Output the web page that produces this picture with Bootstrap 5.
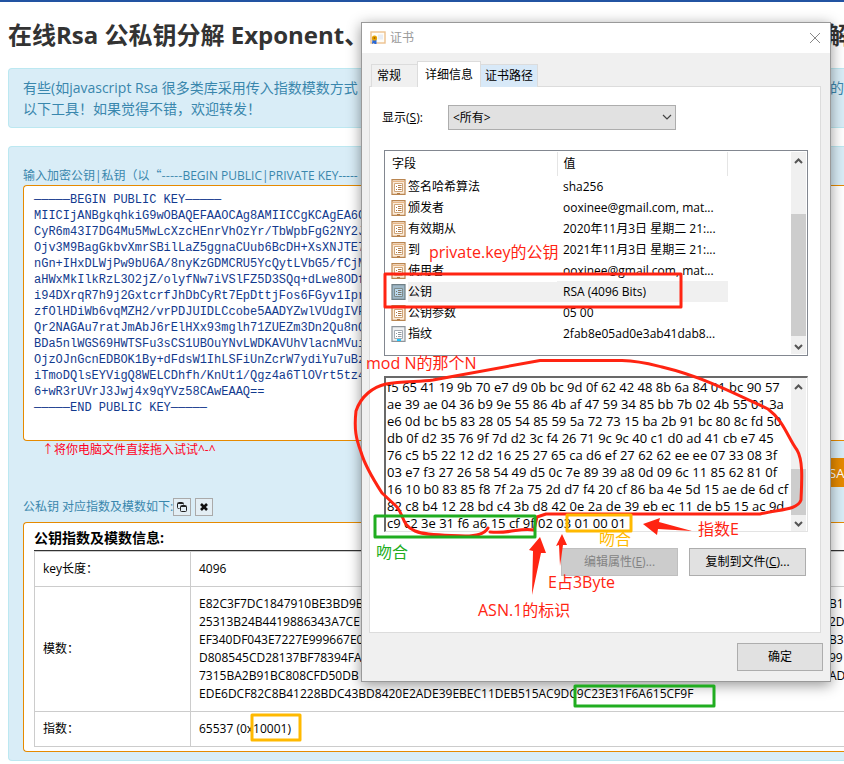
<!DOCTYPE html>
<html lang="zh-CN">
<head>
<meta charset="utf-8">
<meta name="viewport" content="width=device-width, initial-scale=1">
<title>在线Rsa 公私钥分解</title>
<link href="https://cdn.jsdelivr.net/npm/bootstrap@5.3.0/dist/css/bootstrap.min.css" rel="stylesheet">
<style>
body{font-family:"Open Sans","Noto Sans CJK SC",sans-serif;font-size:12px;line-height:18px;color:#000;background:#fff}
.page-shell{min-height:764px}
.top-bar{height:2px;background:#2253a2}
.page-title{font-size:24px;line-height:32px;font-weight:700;color:#333;margin:17px 0 17px 8px}
.tail-title{width:17px}
.tail-info{width:14px}
.tail-hex{width:15px}
.info-box{background:#d9edf7;border:1px solid #bce8f1;color:#3a87ad;margin-left:8px;border-right:0;border-radius:4px 0 0 4px}
.info-intro{font-size:14px;line-height:21px;padding:8px 0 8px 14px;margin-bottom:18px}
.tool-box{padding:17px 0 8px 14px}
.key-label{line-height:21px;height:21px;display:block;white-space:nowrap}
.cjk-face{font-family:"Noto Sans CJK SC",sans-serif}
.key-area{height:256px;border:1px solid #e68a00;border-right:0;border-radius:4px 0 0 4px;background:#fff;color:#123a8e;font-family:"Liberation Mono",monospace;font-size:12px;line-height:16px;padding:6px 0 6px 10px;resize:none;white-space:pre;overflow:hidden;outline:0}
.hint{line-height:17px;height:17px;color:#f02;padding-left:19px}
.btn-orange{width:40px;height:29px;background:#e68a00;color:#fff;border:0;border-radius:0;font-size:13px;padding:0 0 0 17px;text-align:left;white-space:nowrap;overflow:hidden}
.result-head{height:35px;padding-bottom:6px}
.mini-btn{width:18px;height:18px;border:1px solid #aaa;background:#e3eef4;padding:0}
.result-box{background:#fff;border:1px solid #e68a00;border-right:0;border-radius:4px 0 0 4px;color:#000;padding:4px 0 4px 10px}
.result-box h2{font-size:14px;line-height:22px;height:24px;font-weight:700;border-bottom:1px solid #333;margin:0}
.data-table{width:100%;border-collapse:collapse;table-layout:fixed}
.data-table td,.data-table th{border:1px solid #ccc;padding:8px;font-weight:400}
.data-table th{width:156px}
.data-table td{border-right:0;padding-right:0}
.line-row{display:flex;justify-content:space-between;white-space:nowrap;overflow:hidden}
.line-row>span:last-child{overflow:hidden;flex:none}
.cert-window{position:absolute;top:22px;left:361px;width:470px;background:#f0f0f0;border:1px solid #999;box-shadow:0 3px 13px rgba(0,0,0,.42);color:#000}
.cert-title{height:30px;background:#fff;color:#999;padding:0 9px 0 8px}
.cert-title button{border:0;background:none;padding:0;width:12px;height:30px;display:flex;align-items:center}
.cert-body{padding:8px 7px 10px}
.tab-row{padding-left:2px;margin-bottom:-1px;position:relative}
.tab-row button{border:1px solid #dcdcdc;border-bottom:0;background:#f0f0f0;height:23px;padding:0 5px;color:#000;line-height:22px}
.tab-row .tab-first{width:46px;text-align:left;border-right:0}
.tab-row .tab-on{height:26px;width:64px;background:#fff;padding:0 6px;white-space:nowrap}
.tab-row .tab-blue{background:#d8e9f8;border-left:0;width:57px;white-space:nowrap;padding:0 4px}
.tab-panel{background:#fff;border:1px solid #dcdcdc;padding:18px 12px 56px;margin-right:2px}
.show-row label{width:66px}
.show-row select{width:228px;height:25px;appearance:none;border:1px solid #adadad;background:#e1e1e1;border-radius:0;padding:0 4px;font-size:12px;color:#000}
.select-wrap{position:relative}
.select-wrap svg{position:absolute;right:4px;top:9px;pointer-events:none}
.list-frame{border:1px solid #828790;height:206px;padding:1px;margin:20px 0 0 2px}
.field-table{table-layout:fixed;width:342px;border-collapse:collapse}
.field-table th{height:24px;font-weight:400;border-right:1px solid #e5e5e5;padding:0 6px}
.field-table td{height:21px;padding:0 6px;line-height:20px;white-space:nowrap}
.field-table td:first-child{padding-left:5px}
.field-table .c-one{width:171px}
.field-table svg{display:block;margin-right:2px;flex:none}
.picked td:last-child{background:#f0f0f0}
.picked .name-part{background:#f0f0f0;margin-right:-6px;flex:1}
.bar{width:15px;background:#f0f0f0;flex:none}
.bar svg{display:block;flex:none}
.thumb{background:#cdcdcd}
.thumb-list{height:122px;margin-top:44px}
.thumb-hex{height:46px;margin-top:73px}
.hex-frame{border:1px solid #e3e3e3;border-top:2px solid #696969;border-left:2px solid #696969;height:156px;margin:20px 0 0 2px;padding-right:1px}
.hex-frame textarea{flex:1;min-width:0;border:0;resize:none;outline:0;overflow:hidden;white-space:pre;padding:1px 0 0 1px;font-size:13px;line-height:17px;color:#000;background:#fff}
.win-btn{height:28px;border:1px solid #adadad;background:#e1e1e1;color:#000;padding:0;text-align:center}
.win-btn:disabled{background:#ccc;border-color:#bfbfbf;color:#838383}
.w-wide{width:117px}
.w-ok{width:86px}
.pair-row{gap:11px;margin-right:2px}
.ok-row{margin-top:10px}
.notes{position:absolute;left:0;top:0;pointer-events:none}
.notes text{font-size:16px}
</style>
<script src="https://cdn.jsdelivr.net/npm/bootstrap@5.3.0/dist/js/bootstrap.bundle.min.js"></script>
</head>
<body>
<div class="page-shell position-relative overflow-hidden">
<div class="top-bar"></div>
<main>
<h1 class="page-title line-row"><span>在线Rsa 公私钥分解 Exponent、</span><span class="tail-title">解</span></h1>
<section class="info-box info-intro">
<div class="line-row"><span>有些(如javascript Rsa 很多类库采用传入指数模数方式</span><span class="tail-info">的</span></div>
<div>以下工具！如果觉得不错，欢迎转发！</div>
</section>
<section class="info-box tool-box">
<label class="key-label" for="keyArea">输入加密公钥|私钥<span class="cjk-face">（以“-----</span>BEGIN PUBLIC|PRIVATE KEY-----</label>
<textarea id="keyArea" class="key-area d-block w-100" spellcheck="false">—————BEGIN PUBLIC KEY—————
MIICIjANBgkqhkiG9wOBAQEFAAOCAg8AMIICCgKCAgEA6Cw
CyR6m43I7DG4Mu5MwLcXzcHEnrVhOzYr/TbWpbFgG2NY2JY
Ojv3M9BagGkbvXmrSBilLaZ5ggnaCUub6BcDH+XsXNJTE7J
nGn+IHxDLWjPw9bU6A/8nyKzGDMCRU5YcQytLVbG5/fCjMD
aHWxMkIlkRzL3O2jZ/olyfNw7iVSlFZ5D3SQq+dLwe8ODfB
i94DXrqR7h9j2GxtcrfJhDbCyRt7EpDttjFos6FGyv1Ipr5
zfOlHDiWb6vqMZH2/vrPDJUIDLCcobe5AADYZwlVUdgIVFz
Qr2NAGAu7ratJmAbJ6rElHXx93mglh71ZUEZm3Dn2Qu8nQ9
BDa5nlWGS69HWTSFu3sCS1UBOuYNvLWDKAVUhVlacnMVuiu
OjzOJnGcnEDBOK1By+dFdsW1IhLSFiUnZcrW7ydiYu7uBzM
iTmoDQlsEYVigQ8WELCDhfh/KnUt1/Qgz4a6TlOVrt5tz4L
6+wR3rUVrJ3Jwj4x9qYVz58CAwEAAQ==
—————END PUBLIC KEY—————</textarea>
<div class="hint">↑将你电脑文件直接拖入试试^-^</div>
<div class="d-flex justify-content-end"><button class="btn-orange" type="button">RSA私钥</button></div>
<div class="result-head d-flex align-items-end">
<span>公私钥 对应指数及模数如下:</span>
<button class="mini-btn d-flex align-items-center justify-content-center" type="button" aria-label="复制"><svg width="10" height="10" viewBox="0 0 10 10" fill="none" stroke="#222"><path d="M2.5 6.5h-1a1 1 0 0 1-1-1v-4a1 1 0 0 1 1-1h4a1 1 0 0 1 1 1v1"/><rect x="3.5" y="3.5" width="6" height="6" rx="1"/><path d="M1 1.5h5M4 4.5h5"/></svg></button>
<button class="mini-btn d-flex align-items-center justify-content-center ms-1" type="button" aria-label="清除"><svg width="8" height="8" viewBox="0 0 8 8" stroke="#111" stroke-width="2.6"><path d="M1 1l6 6M7 1l-6 6"/></svg></button>
</div>
<div class="result-box">
<h2>公钥指数及模数信息:</h2>
<table class="data-table">
<tr><th scope="row">key长度：</th><td>4096</td></tr>
<tr><th scope="row">模数：</th><td>
<div class="line-row"><span>E82C3F7DC1847910BE3BD9B</span><span class="tail-hex">B1</span></div>
<div class="line-row"><span>25313B24B4419886343A7CE</span><span class="tail-hex">2D</span></div>
<div class="line-row"><span>EF340DF043E7227E999667E0</span><span class="tail-hex">B3</span></div>
<div class="line-row"><span>D808545CD28137BF78394FA</span><span class="tail-hex">99</span></div>
<div class="line-row"><span>7315BA2B91BC808CFD50DB</span><span class="tail-hex">AD</span></div>
<div>EDE6DCF82C8B41228BDC43BD8420E2ADE39EBEC11DEB515AC9DC9C23E31F6A615CF9F</div>
</td></tr>
<tr><th scope="row">指数：</th><td>65537 (0x10001)</td></tr>
</table>
</div>
</section>
</main>

<section class="cert-window" role="dialog" aria-label="证书">
<header class="cert-title d-flex align-items-center justify-content-between">
<span class="d-flex align-items-center gap-1"><svg width="16" height="14" viewBox="0 0 16 14"><rect x="1" y="1" width="14" height="11" fill="#fffdf8" stroke="#edc18d" stroke-width="1.4"/><path d="M8 3.5h5v5H8z" fill="#e9edf4"/><path d="M2.500 8l-.5 5 2-1 .5 1 1 0 1 0 0-5z" fill="#2868d8"/><circle cx="4.5" cy="7" r="2.6" fill="#e8a400"/><circle cx="4.5" cy="7" r="1" fill="#a86400"/></svg><span>证书</span></span>
<button type="button" aria-label="关闭"><svg width="12" height="12" viewBox="0 0 12 12" stroke="#888"><path d="M1 1l10 10M11 1L1 11"/></svg></button>
</header>
<div class="cert-body">
<div class="tab-row d-flex align-items-end" role="tablist">
<button class="tab-first" type="button" role="tab">常规</button><button class="tab-on" type="button" role="tab" aria-selected="true">详细信息</button><button class="tab-blue" type="button" role="tab">证书路径</button>
</div>
<div class="tab-panel">
<div class="show-row d-flex align-items-center"><label for="showSel">显示(<u>S</u>):</label><div class="select-wrap"><select id="showSel"><option>&lt;所有&gt;</option></select><svg width="10" height="7" viewBox="0 0 10 7" fill="none" stroke="#444" stroke-width="1.2"><path d="M1 1l4 4 4-4"/></svg></div></div>
<svg class="d-none" aria-hidden="true"><symbol id="fieldIcon" viewBox="0 0 15 16"><path d="M1 .7h13v14.6H1z" fill="#fcebd8" stroke="#b98550" stroke-width="1.2"/><path d="M1.5 2.5h12" stroke="#e8b685"/><path d="M3.5 4.5h8v8h-8z" fill="#fff" stroke="#d0a67a"/><path d="M5 7.5h1M7 6.500h3.500M5 10.500h1M7 8.500h3.500M7 10.500h3.500M6 14.500h3" fill="none" stroke="#b07a45"/></symbol><symbol id="blueIcon" viewBox="0 0 15 16"><path d="M1 .7h13v14.6H1z" fill="#9fb8c7" stroke="#6f8087" stroke-width="1.2"/><path d="M3.5 4.5h8v8h-8z" fill="#b9d8ed" stroke="#7e8c8c"/><path d="M5 7.500h1M7 6.500h3.500M5 10.500h1M7 8.500h3.500M7 10.500h3.500" fill="none" stroke="#7b7568"/></symbol><symbol id="greyIcon" viewBox="0 0 15 16"><path d="M1 .7h13v14.6H1z" fill="#eef0f2" stroke="#8d949b" stroke-width="1.2"/><path d="M3.5 4.5h8v8h-8z" fill="#fff" stroke="#a4abb3"/><path d="M5 7.500h1M7 6.500h3.500M5 10.500h1M7 8.500h3.500M7 10.500h3.500" fill="none" stroke="#8f979f"/><path d="M6 14h4" stroke="#20c8ff" stroke-width="2"/></symbol></svg>
<div class="list-frame d-flex justify-content-between">
<table class="field-table align-self-start">
<thead><tr><th class="c-one" scope="col">字段</th><th scope="col">值</th></tr></thead>
<tbody>
<tr><td><div class="d-flex align-items-center"><svg width="15" height="16"><use href="#fieldIcon"/></svg><span>签名哈希算法</span></div></td><td>sha256</td></tr>
<tr><td><div class="d-flex align-items-center"><svg width="15" height="16"><use href="#fieldIcon"/></svg><span>颁发者</span></div></td><td>ooxinee@gmail.com, mat...</td></tr>
<tr><td><div class="d-flex align-items-center"><svg width="15" height="16"><use href="#fieldIcon"/></svg><span>有效期从</span></div></td><td>2020年11月3日 星期二 21:...</td></tr>
<tr><td><div class="d-flex align-items-center"><svg width="15" height="16"><use href="#fieldIcon"/></svg><span>到</span></div></td><td>2021年11月3日 星期三 21:...</td></tr>
<tr><td><div class="d-flex align-items-center"><svg width="15" height="16"><use href="#fieldIcon"/></svg><span>使用者</span></div></td><td>ooxinee@gmail.com, mat...</td></tr>
<tr class="picked"><td><div class="d-flex align-items-center"><svg width="15" height="16"><use href="#blueIcon"/></svg><span class="name-part">公钥</span></div></td><td>RSA (4096 Bits)</td></tr>
<tr><td><div class="d-flex align-items-center"><svg width="15" height="16"><use href="#fieldIcon"/></svg><span>公钥参数</span></div></td><td>05 00</td></tr>
<tr><td><div class="d-flex align-items-center"><svg width="15" height="16"><use href="#greyIcon"/></svg><span>指纹</span></div></td><td>2fab8e05ad0e3ab41dab8...</td></tr>
</tbody>
</table>
<div class="bar d-flex flex-column"><svg width="15" height="18" viewBox="0 0 15 18" fill="none" stroke="#555" stroke-width="2"><path d="M4 11l3.500-3.500L11 11"/></svg><div class="thumb thumb-list"></div><svg class="mt-auto" width="15" height="16" viewBox="0 0 15 16" fill="none" stroke="#555" stroke-width="2"><path d="M4 7l3.500 3.500L11 7"/></svg></div>
</div>
<div class="hex-frame d-flex">
<textarea aria-label="公钥内容" readonly spellcheck="false">f5 65 41 19 9b 70 e7 d9 0b bc 9d 0f 62 42 48 8b 6a 84 01 bc 90 57
ae 39 ae 04 36 b9 9e 55 86 4b af 47 59 34 85 bb 7b 02 4b 55 01 3a
e6 0d bc b5 83 28 05 54 85 59 5a 72 73 15 ba 2b 91 bc 80 8c fd 50
db 0f d2 35 76 9f 7d d2 3c f4 26 71 9c 9c 40 c1 d0 ad 41 cb e7 45
76 c5 b5 22 12 d2 16 25 27 65 ca d6 ef 27 62 62 ee ee 07 33 08 3f
03 e7 f3 27 26 58 54 49 d5 0c 7e 89 39 a8 0d 09 6c 11 85 62 81 0f
16 10 b0 83 85 f8 7f 2a 75 2d d7 f4 20 cf 86 ba 4e 5d 15 ae de 6d cf
82 c8 b4 12 28 bd c4 3b d8 42 0e 2a de 39 eb ec 11 de b5 15 ac 9d
c9 c2 3e 31 f6 a6 15 cf 9f 02 03 01 00 01</textarea>
<div class="bar d-flex flex-column"><svg width="15" height="18" viewBox="0 0 15 18" fill="none" stroke="#555" stroke-width="2"><path d="M4 11l3.500-3.500L11 11"/></svg><div class="thumb thumb-hex"></div><svg class="mt-auto" width="15" height="16" viewBox="0 0 15 16" fill="none" stroke="#555" stroke-width="2"><path d="M4 7l3.500 3.500L11 7"/></svg></div>
</div>
<div class="pair-row d-flex justify-content-end mt-3"><button class="win-btn w-wide" type="button" disabled>编辑属性(<u>E</u>)...</button><button class="win-btn w-wide" type="button">复制到文件(<u>C</u>)...</button></div>
</div>
<div class="ok-row d-flex justify-content-end"><button class="win-btn w-ok" type="button">确定</button></div>
</div>
</section>

<svg class="notes" width="844" height="764" viewBox="0 0 844 764" fill="none" stroke-width="3" stroke-linejoin="round" stroke-linecap="round">
<g stroke="#ff2412">
<rect x="385" y="274" width="296" height="33"/>
<path d="M488 528C484 535 475 536 465 536C446 535 427 536 415 531C401 525 404 514 396 506L382 493C373 479 365 466 361 452C356 439 354 429 356 411C361 396 373 387 386 384C402 381 420 382 433 380L540 360.500H622C640 361 650 364 662 367C700 376 730 391 768 409C784 421 788 438 797 450C803 460 802 478 801 500C797 511 778 509 760 514H546L537 517L534 530C520 527 512 534 490 532"/>
</g>
<g fill="#ff2412">
<path d="M540 537l-11 13 4 1-1 44 9-42 5 0zM562 534l-6 12 3-1 1 21 3-21 4 0zM643 524l17-6-1 4 33 9-34-2-1 6z"/>
<text x="429" y="258">private.key的公钥</text>
<text x="366" y="369">mod N的那个N</text>
<text x="698" y="535">指数E</text>
<text x="548" y="588">E占3Byte</text>
<text x="478" y="616">ASN.1的标识</text>
</g>
<g stroke="#20ad20"><rect x="375" y="516" width="160" height="21"/><rect x="575" y="686" width="139" height="20"/></g>
<g stroke="#ffb900"><rect x="567" y="515" width="64" height="16"/><rect x="252" y="715" width="48" height="25"/></g>
<text x="376" y="558" fill="#20ad20">吻合</text>
<text x="599" y="545" fill="#ffb900">吻合</text>
</svg>
</div>
</body>
</html>
